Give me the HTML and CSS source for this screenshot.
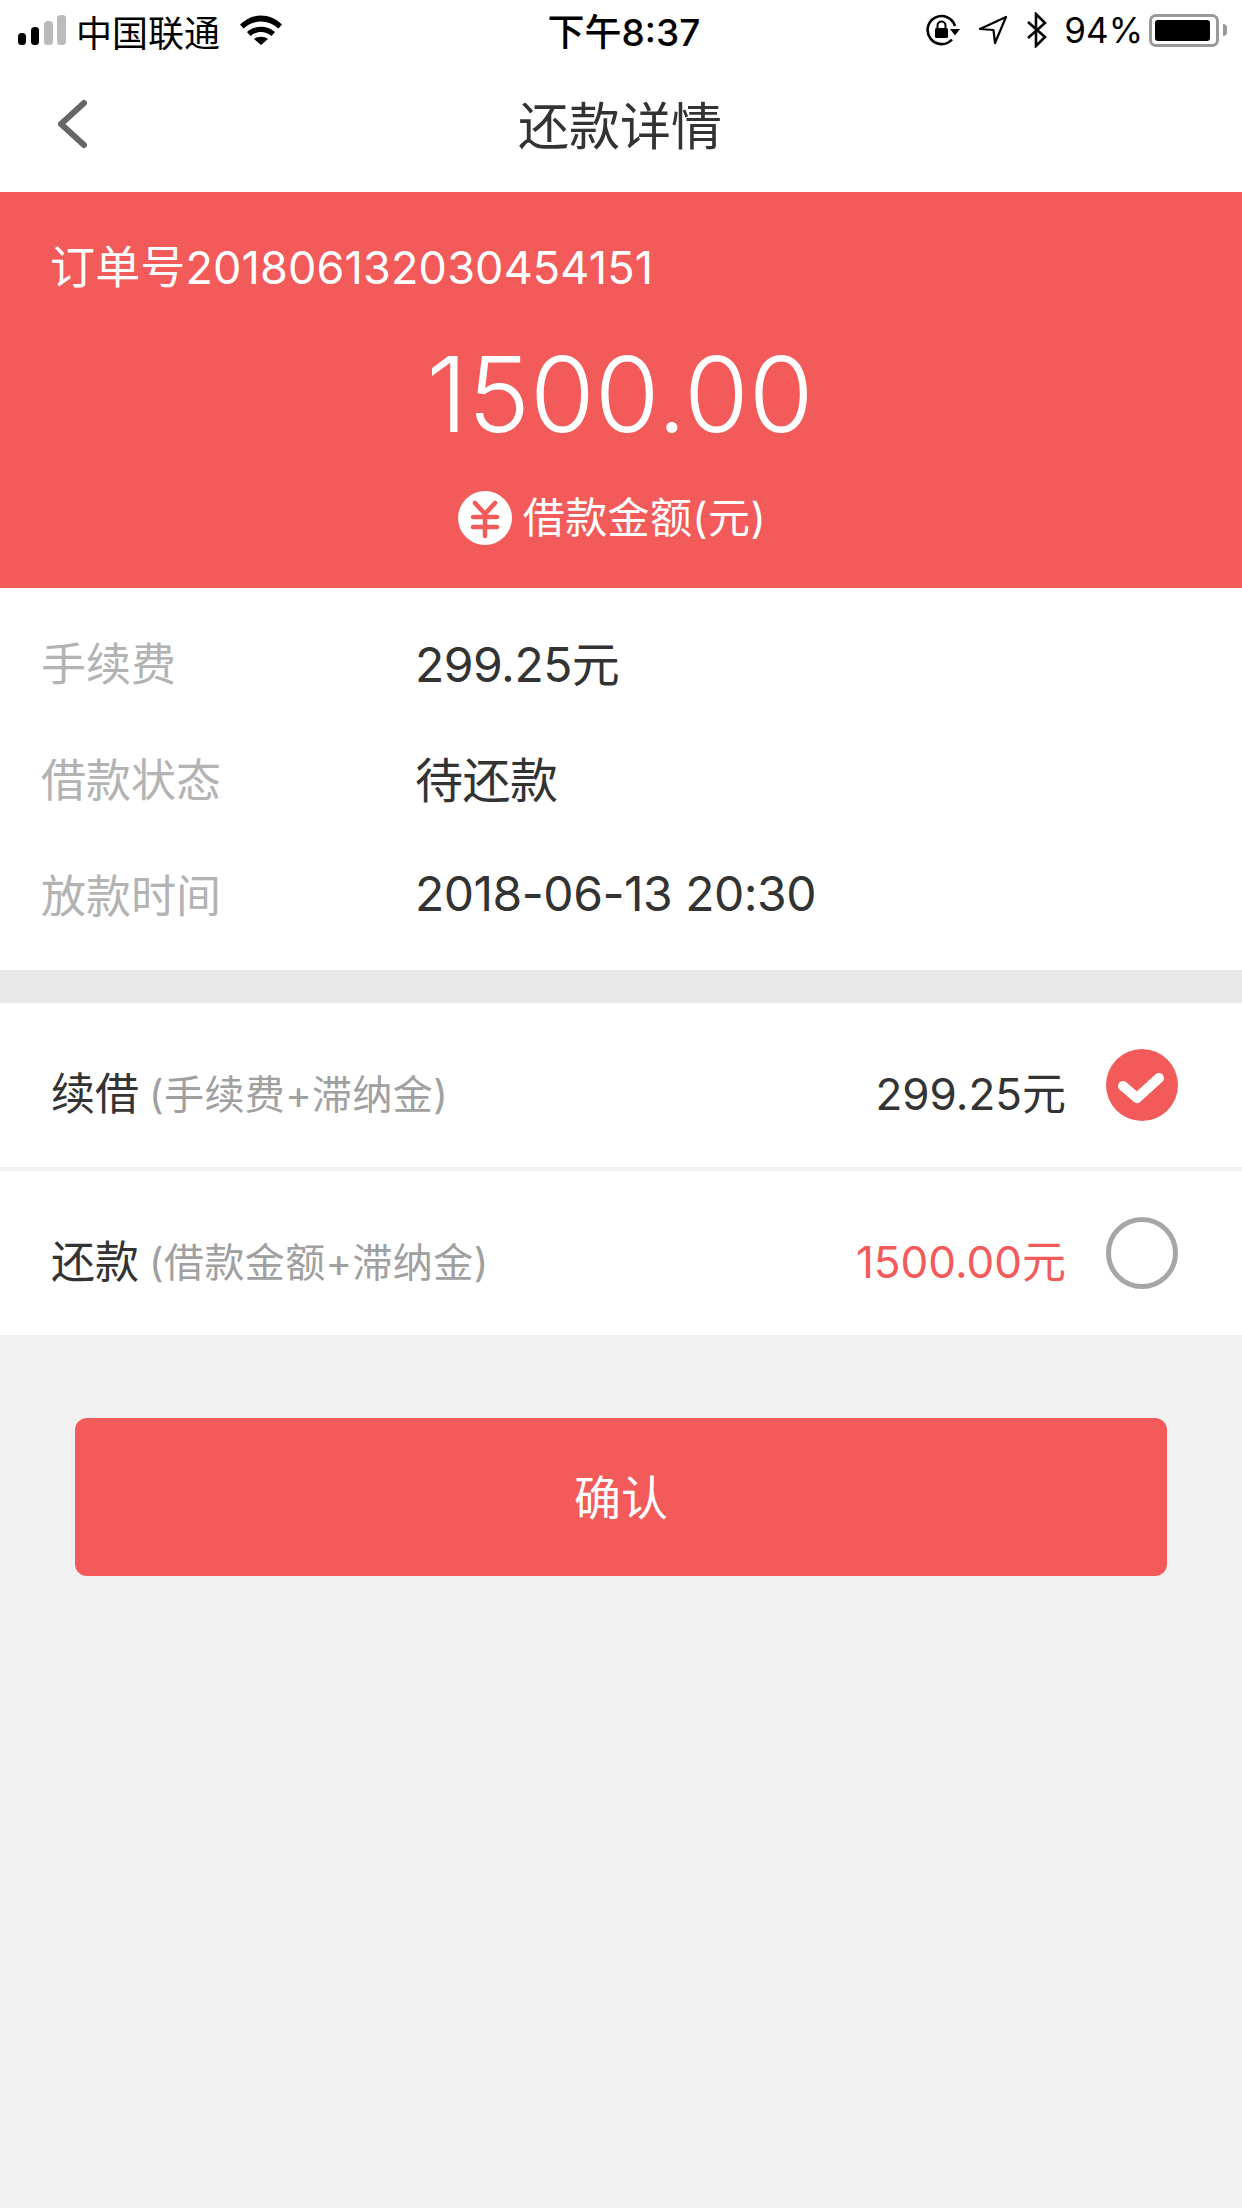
FILE: index.html
```html
<!DOCTYPE html>
<html lang="zh-CN">
<head>
  <meta charset="UTF-8">
  <title>还款详情</title>
  <link rel="stylesheet" href="styles.css">
</head>
<body>

<div class="status-bar">
  <div class="status-left">
    <svg class="signal" width="48" height="30" viewBox="0 0 48 30">
      <rect x="0" y="18" width="8" height="12" rx="3.500" fill="#000"/>
      <rect x="13" y="12" width="8" height="18" rx="3.500" fill="#000"/>
      <rect x="26" y="6" width="9" height="24" rx="3.500" fill="#bbb"/>
      <rect x="39" y="0" width="9" height="30" rx="3.500" fill="#bbb"/>
    </svg>
    <span class="carrier">中国联通</span>
    <svg class="wifi" width="42" height="30" viewBox="0 0 42 30">
      <path d="M0 9.500C12 -2.500 30 -2.500 42 9.500L38.500 13.500C28 4 14 4 3.500 13.500Z" fill="#000"/>
      <path d="M7 17C15 10 27 10 35 17L31.500 21C25 15.500 17 15.500 10.500 21Z" fill="#000"/>
      <path d="M14 24C18 21 24 21 28 24L21 30Z" fill="#000"/>
    </svg>
  </div>
  <div class="status-time">下午8:37</div>
  <div class="status-right">
    <svg width="34" height="32" viewBox="0 0 34 32">
      <path d="M26 25.500A14 14 0 1 1 29 12" fill="none" stroke="#000" stroke-width="2.600"/>
      <path d="M24 15H34L29 21.500Z" fill="#000"/>
      <rect x="9" y="14" width="13" height="10" rx="1.500" fill="#000"/>
      <path d="M11.500 14V11.500A4 4 0 0 1 19.500 11.500V14" fill="none" stroke="#000" stroke-width="2"/>
    </svg>
    <svg class="loc" width="30" height="30" viewBox="0 0 30 30">
      <path d="M2 14L28 2L17 28L15.500 15Z" fill="none" stroke="#000" stroke-width="2.200" stroke-linejoin="round"/>
    </svg>
    <svg class="bt" width="22" height="36" viewBox="0 0 22 36">
      <path d="M2 10L19 25L10 34V2L19 11L2 26" fill="none" stroke="#000" stroke-width="2.600"/>
    </svg>
    <span class="percent">94%</span>
    <div class="battery">
      <div class="battery-body"><div class="battery-fill"></div></div>
      <div class="battery-tip"></div>
    </div>
  </div>
</div>

<div class="nav-bar">
  <svg class="back" width="32" height="48" viewBox="0 0 32 48">
    <path d="M28 3L5 24L28 45" fill="none" stroke="#666" stroke-width="6" stroke-linecap="round" stroke-linejoin="round"/>
  </svg>
  <h1>还款详情</h1>
</div>

<div class="summary">
  <p class="order">订单号201806132030454151</p>
  <p class="amount">1500.00</p>
  <p class="amount-label">
    <span class="yen">
      <svg width="54" height="54" viewBox="0 0 54 54">
        <circle cx="27" cy="27" r="27" fill="#fff"/>
        <path d="M17 12L27 23L37 12M15 26H39M15 36H39M27 23V45" fill="none" stroke="#f35a5a" stroke-width="4.500" stroke-linecap="round" stroke-linejoin="round"/>
      </svg>
    </span>
    借款金额(元)
  </p>
</div>

<div class="info">
  <div class="info-row"><span class="info-key">手续费</span><span class="info-val">299.25元</span></div>
  <div class="info-row"><span class="info-key">借款状态</span><span class="info-val">待还款</span></div>
  <div class="info-row"><span class="info-key">放款时间</span><span class="info-val">2018-06-13 20:30</span></div>
</div>

<div class="options">
  <div class="option">
    <span class="opt-name">续借</span>
    <span class="opt-note">(手续费+滞纳金)</span>
    <span class="opt-price">299.25元</span>
    <svg class="opt-check" width="72" height="72" viewBox="0 0 72 72">
      <circle cx="36" cy="36" r="36" fill="#f35a5a"/>
      <path d="M17 37L31 49L53 29" fill="none" stroke="#fff" stroke-width="10" stroke-linecap="round" stroke-linejoin="round"/>
    </svg>
  </div>
  <div class="option">
    <span class="opt-name">还款</span>
    <span class="opt-note">(借款金额+滞纳金)</span>
    <span class="opt-price red">1500.00元</span>
    <svg class="opt-check" width="72" height="72" viewBox="0 0 72 72">
      <circle cx="36" cy="36" r="33.500" fill="none" stroke="#a6a6a6" stroke-width="5"/>
    </svg>
  </div>
</div>

<button class="confirm">确认</button>

</body>
</html>
```

FILE: styles.css
```css
* {margin:0;padding:0;box-sizing:border-box}
html, body {height:100%}
body {
  background: #f1f1f1;
  color: #333;
  font-family: Inter, "Noto Sans CJK SC", sans-serif;
  width: 1242px;
  height: 2208px;
  overflow: hidden;
}

/* status bar */
.status-bar {
  height: 60px;
  background: #fff;
  color: #000;
  display: flex;
  align-items: center;
  justify-content: space-between;
  position: relative;
  padding: 0 15px 0 18px;
}
.status-left, .status-right {display:flex;align-items:center}
.carrier {font-size:36px;margin-left:10px;margin-top:2px}
.wifi {margin-left:20px}
.status-time {
  position: absolute;
  left: 0;
  right: 0;
  text-align: center;
  font-size: 37px;
  font-weight: 500;
  padding-left: 6px;
}
.loc {margin-left:18px}
.bt {margin-left:18px}
.percent {font-size:35px;margin-left:16px}
.battery {display:flex;align-items:center;margin-left:6px}
.battery-body {
  width: 70px;
  height: 33px;
  border: 3px solid #999;
  border-radius: 7px;
  padding: 3px;
}
.battery-fill {height:100%;width:94%;background:#000;border-radius:3px}
.battery-tip {
  width: 4px;
  height: 12px;
  background: #999;
  border-radius: 0 4px 4px 0;
  margin-left: 4px;
}

/* nav */
.nav-bar {
  height: 132px;
  background: #fff;
  display: flex;
  align-items: center;
  justify-content: center;
  position: relative;
}
.nav-bar h1 {font-size:51px;font-weight:400;margin-left:-2px;margin-top:-6px}
.back {position:absolute;left:56px;top:40px}

/* red block */
.summary {
  height: 396px;
  background: #f35a5a;
  color: #fff;
  padding-top: 46px;
}
.order {font-size:45px;line-height:60px;padding-left:50px;letter-spacing:0.15px}
.amount {
  font-size: 105px;
  font-weight: 350;
  line-height: 124px;
  text-align: center;
  margin-top: 34px;
  margin-left: -2px;
}
.amount-label {
  display: flex;
  align-items: center;
  justify-content: center;
  font-size: 42px;
  line-height: 56px;
  letter-spacing: 0.4px;
  margin-top: 34px;
  margin-left: -18px;
}
.yen {display:flex;margin-right:11px}

/* info rows */
.info {
  height: 382px;
  background: #fff;
  padding-top: 15px;
}
.info-row {
  height: 116px;
  display: flex;
  align-items: center;
}
.info-key {width:415px;padding-left:41px;color:#b3b3b3;font-size:45px}
.info-val {color:#333;font-size:48px;letter-spacing:-0.5px}

/* options */
.options {padding-top:33px;background:linear-gradient(#e9e9e9 33px, transparent 33px)}
.option {
  height: 164px;
  background: #fff;
  display: flex;
  align-items: center;
  padding: 0 64px 0 51px;
  margin-bottom: 4px;
}
.option:last-child {margin-bottom:0}
.opt-name {font-size:44px;color:#333;margin-top:12px}
.opt-note {font-size:40px;color:#a0a0a0;margin-left:10px;margin-top:14px;letter-spacing:0.4px}
.opt-price {font-size:44px;margin-left:auto;margin-right:40px;color:#333;margin-top:12px}
.opt-price.red {color:#f35a5a}

.confirm {
  display: block;
  width: 1092px;
  height: 158px;
  margin: 83px 0 0 75px;
  background: #f35a5a;
  color: #fff;
  border: none;
  border-radius: 12px;
  font-family: inherit;
  font-size: 47px;
  padding-bottom: 6px;
}
```
